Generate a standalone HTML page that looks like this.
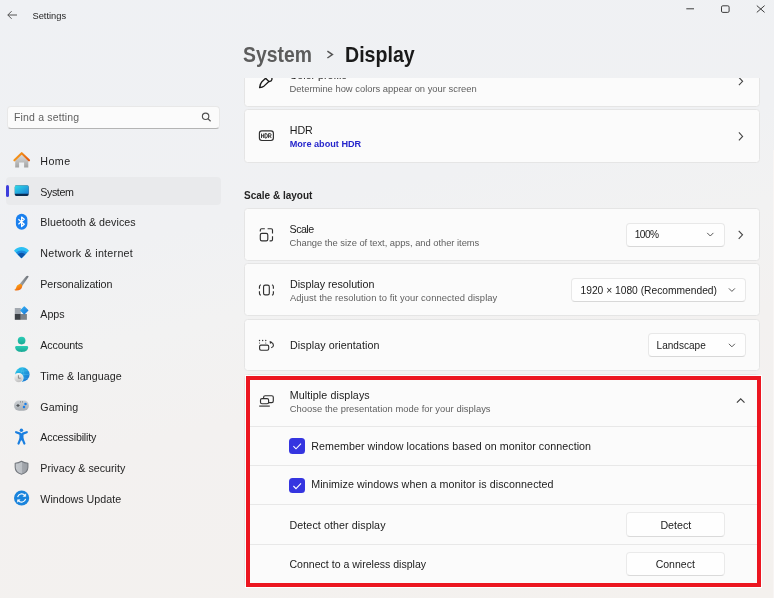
<!DOCTYPE html>
<html><head><meta charset="utf-8">
<style>
html,body{margin:0;padding:0}
body{width:774px;height:598px;overflow:hidden;position:relative;font-family:"Liberation Sans",sans-serif;color:#1b1b1b;
background:linear-gradient(168deg,#eff1f4 0%,#f0f1f3 35%,#f2f2f2 48%,#f3f1f0 62%,#f4f1ee 100%);}
.a{position:absolute;white-space:nowrap;line-height:1}
.t{font-size:10.7px;color:#1b1b1b}
.s{font-size:9.4px;color:#5f5f5f}
.card{position:absolute;left:244px;width:516px;background:#fbfbfb;border:1px solid #e5e5e5;border-radius:3.5px;box-sizing:border-box}
.dd{position:absolute;background:#fefefe;border:1px solid #e8e8e8;border-bottom-color:#d8d8d8;border-radius:4px;box-sizing:border-box}
.btn{position:absolute;background:#fefefe;border:1px solid #eaeaea;border-bottom-color:#dadada;border-radius:4px;box-sizing:border-box}
svg{position:absolute;overflow:visible}
.nav{font-size:10.7px;color:#1f1f1f}
</style></head><body><div id="root" style="position:absolute;left:0;top:0;width:774px;height:598px;will-change:transform">

<!-- title bar -->
<svg style="left:0;top:0" width="20" height="30"><path d="M7.8 15H17M11.6 11.2L7.8 15L11.6 18.8" fill="none" stroke="#555" stroke-width="1"/></svg>
<div class="a" style="left:32.5px;top:11.7px;font-size:9.3px;color:#1f1f1f">Settings</div>
<svg style="left:0;top:0" width="774" height="20">
 <path d="M686.3 8.8H694" stroke="#3c3c3c" stroke-width="1" fill="none"/>
 <rect x="721.5" y="5.8" width="7.6" height="6.6" rx="1.3" stroke="#3c3c3c" stroke-width="1" fill="none"/>
 <path d="M756.8 5.6L764.6 12.4M764.6 5.6L756.8 12.4" stroke="#3c3c3c" stroke-width="1" fill="none"/>
</svg>

<!-- breadcrumb -->
<div class="a" style="left:243.2px;top:43.9px;font-size:21.7px;font-weight:700;color:#5c5c5c;transform:scaleX(0.893);transform-origin:0 0">System</div>
<svg style="left:0;top:0" width="774" height="70"><path d="M327.4 51.2L332.4 54.6L327.4 58" fill="none" stroke="#555" stroke-width="1.5"/></svg>
<div class="a" style="left:345px;top:43.9px;font-size:21.7px;font-weight:700;color:#1a1a1a;transform:scaleX(0.903);transform-origin:0 0">Display</div>

<!-- search -->
<div style="position:absolute;left:6.5px;top:105.6px;width:213.8px;height:23.6px;background:#fbfbfb;border:1px solid #e8e8e8;border-bottom:1.4px solid #b4b4b4;border-radius:4px;box-sizing:border-box"></div>
<div class="a" style="letter-spacing:0.16px;left:14px;top:112.4px;font-size:10.5px;color:#5f5f5f">Find a setting</div>
<svg style="left:0;top:0" width="230" height="130"><circle cx="205.6" cy="116.3" r="3.2" fill="none" stroke="#505050" stroke-width="1.15"/><path d="M207.9 118.6L210.6 121.2" stroke="#505050" stroke-width="1.2"/></svg>

<!-- nav selected -->
<div style="position:absolute;left:6px;top:177px;width:215px;height:27.5px;background:#e9eaec;border-radius:4px"></div>
<div style="position:absolute;left:6.4px;top:184.7px;width:2.2px;height:12.3px;background:#3d3ddc;border-radius:1.5px"></div>

<!-- nav texts -->
<div class="a nav" style="left:40.3px;top:155.9px;letter-spacing:0.43px">Home</div>
<div class="a nav" style="left:40.3px;top:186.6px;letter-spacing:-0.42px">System</div>
<div class="a nav" style="left:40.3px;top:217.3px;letter-spacing:0.05px">Bluetooth &amp; devices</div>
<div class="a nav" style="left:40.3px;top:248.0px;letter-spacing:0.27px">Network &amp; internet</div>
<div class="a nav" style="left:40.3px;top:278.7px;letter-spacing:-0.07px">Personalization</div>
<div class="a nav" style="left:40.3px;top:309.4px">Apps</div>
<div class="a nav" style="left:40.3px;top:340.1px;letter-spacing:-0.16px">Accounts</div>
<div class="a nav" style="left:40.3px;top:370.8px;letter-spacing:0.07px">Time &amp; language</div>
<div class="a nav" style="left:40.3px;top:401.5px;letter-spacing:0.08px">Gaming</div>
<div class="a nav" style="left:40.3px;top:432.2px;letter-spacing:-0.175px">Accessibility</div>
<div class="a nav" style="left:40.3px;top:462.9px">Privacy &amp; security</div>
<div class="a nav" style="left:40.3px;top:493.6px">Windows Update</div>

<!-- nav icons -->
<svg style="left:0;top:0" width="40" height="520">
 <defs>
  <linearGradient id="gHome" x1="0" y1="0" x2="0" y2="1"><stop offset="0" stop-color="#dcdcdc"/><stop offset="1" stop-color="#a2a2a2"/></linearGradient>
  <linearGradient id="gRoof" gradientUnits="userSpaceOnUse" x1="16" y1="153" x2="28" y2="162"><stop offset="0" stop-color="#f7a21e"/><stop offset="1" stop-color="#e2560c"/></linearGradient>
  <linearGradient id="gSys" x1="0" y1="0" x2="1" y2="1"><stop offset="0" stop-color="#2edbe8"/><stop offset="1" stop-color="#1a7ed6"/></linearGradient>
  <linearGradient id="gShield" x1="0" y1="0" x2="1" y2="0"><stop offset="0" stop-color="#c6cacf"/><stop offset="0.5" stop-color="#bcc0c5"/><stop offset="0.5" stop-color="#a4a8ae"/><stop offset="1" stop-color="#9a9ea4"/></linearGradient>
  <linearGradient id="gWifi" x1="0" y1="0" x2="0" y2="1"><stop offset="0" stop-color="#2cb8f0"/><stop offset="1" stop-color="#1070c0"/></linearGradient>
  <linearGradient id="gBrushH" x1="0" y1="0" x2="1" y2="0"><stop offset="0" stop-color="#a4a9ae"/><stop offset="1" stop-color="#6a7076"/></linearGradient>
  <linearGradient id="gBrushT" x1="0" y1="0" x2="0.6" y2="1"><stop offset="0" stop-color="#ffb816"/><stop offset="1" stop-color="#ee6410"/></linearGradient>
  <linearGradient id="gApps" x1="0" y1="0" x2="1" y2="1"><stop offset="0" stop-color="#30b0f4"/><stop offset="1" stop-color="#1a76d6"/></linearGradient>
  <linearGradient id="gAcc" x1="0" y1="0" x2="0" y2="1"><stop offset="0" stop-color="#2ccdb6"/><stop offset="1" stop-color="#18a894"/></linearGradient>
  <linearGradient id="gGlobe" x1="0" y1="0" x2="1" y2="1"><stop offset="0" stop-color="#2ad0ea"/><stop offset="1" stop-color="#1a6cd0"/></linearGradient>
  <linearGradient id="gClock" x1="0" y1="0" x2="0.3" y2="1"><stop offset="0" stop-color="#fafafa"/><stop offset="1" stop-color="#c4c4c4"/></linearGradient>
  <linearGradient id="gGame" x1="0" y1="0" x2="0" y2="1"><stop offset="0" stop-color="#ccd0d4"/><stop offset="1" stop-color="#a8adb2"/></linearGradient>
 </defs>
 <!-- home -->
 <path d="M15.2 160.6V167.6H19.1V162.4H24.1V167.6H28.3V160.6L21.7 154.4Z" fill="url(#gHome)"/>
 <path d="M14.4 160.3L21.7 153.2L29 160.3" fill="none" stroke="url(#gRoof)" stroke-width="2.1" stroke-linecap="round" stroke-linejoin="round"/>
 <!-- system -->
 <rect x="14.8" y="185.6" width="13.8" height="10.4" rx="1.4" fill="#0a2c52"/>
 <path d="M14.8 193.8V187Q14.8 185.6 16.2 185.6H27.2Q28.6 185.6 28.6 187V193.8Z" fill="url(#gSys)"/>
 <!-- bluetooth -->
 <rect x="15.9" y="213.8" width="11.5" height="15.9" rx="5.75" fill="#1a80ee"/>
 <path d="M18.4 219.3L24.3 224.2L21.6 226.5V217L24.3 219.3L18.4 224.2" fill="none" stroke="#fff" stroke-width="1.2" stroke-linejoin="round"/>
 <!-- wifi -->
 <path d="M21.5 258.3L14 250.7Q17 247 21.5 247Q26 247 29 250.7Z" fill="#2cc0f4"/>
 <path d="M21.5 258.3L15.9 252.6A8.4 8.4 0 0 1 27.1 252.6Z" fill="#1a8ae0"/>
 <path d="M21.5 258.3L17.6 254.3A5.6 5.6 0 0 1 25.4 254.3Z" fill="#0d54a8"/>
 <!-- brush -->
 <path d="M26.2 276.2Q27.6 275 28.7 276.4L22 286.2L19.2 284.6Z" fill="url(#gBrushH)"/>
 <path d="M19.2 284.2C20.8 283.4 22.5 284.5 22.2 286.6C21.9 289 19.6 290.6 16.6 290.6C15.6 290.6 14.8 290.3 14.2 289.7C15.6 289.4 16 288.4 16.3 287.2C16.7 285.6 17.8 284.7 19.2 284.2Z" fill="url(#gBrushT)"/>
 <!-- apps -->
 <rect x="14.8" y="308" width="6" height="6" fill="#a3a9b0"/>
 <rect x="14.8" y="314" width="6" height="5.8" fill="#3c4146"/>
 <rect x="20.8" y="314" width="6.1" height="5.8" fill="#7c8288"/>
 <path d="M24.3 306.9L27.8 310.4L24.3 313.9L20.8 310.4Z" fill="url(#gApps)" stroke="url(#gApps)" stroke-width="1.2" stroke-linejoin="round"/>
 <!-- accounts -->
 <circle cx="21.6" cy="340.6" r="3.85" fill="url(#gAcc)"/>
 <path d="M15.2 347.2C15.2 346.4 15.8 345.9 16.6 345.9H26.7C27.5 345.9 28.1 346.4 28.1 347.2C28.1 350.2 25.6 351.9 21.65 351.9C17.7 351.9 15.2 350.2 15.2 347.2Z" fill="url(#gAcc)"/>
 <!-- time -->
 <circle cx="22.4" cy="374.5" r="7.2" fill="url(#gGlobe)"/>
 <path d="M15.4 374.5H29.4M17 370.4Q22.4 372.2 27.8 370.4M17 378.6Q22.4 376.8 27.8 378.6M22.4 367.4Q19.4 374.5 22.4 381.7M22.4 367.4Q25.4 374.5 22.4 381.7" stroke="#6fd3f4" stroke-width="0.45" fill="none" opacity="0.6"/>
 <circle cx="18.6" cy="377.9" r="4.9" fill="#f4f4f4"/>
 <circle cx="18.6" cy="377.9" r="4.3" fill="url(#gClock)"/>
 <path d="M18.4 375.6V378.2H20.3" stroke="#7c7c7c" stroke-width="0.85" fill="none" stroke-linecap="round"/>
 <!-- gaming -->
 <rect x="14" y="400.6" width="14.9" height="10.1" rx="5.05" fill="url(#gGame)"/>
 <path d="M16.4 405.5H19.6M18 403.9V407.1" stroke="#505458" stroke-width="1.2"/>
 <path d="M20.5 401.3V402.5M22.5 401.3V402.5" stroke="#6a6e72" stroke-width="0.7"/>
 <circle cx="25.5" cy="404.1" r="1.25" fill="#1a7ee8"/><circle cx="24" cy="407" r="1.25" fill="#1a7ee8"/>
 <!-- accessibility -->
 <circle cx="21.4" cy="430.3" r="1.75" fill="#1a7fe0"/>
 <path d="M16.1 432.2L20 433.6M26.8 432.2L22.9 433.6" stroke="#1a7fe0" stroke-width="2.2" stroke-linecap="round"/>
 <path d="M19.4 433.2H23.5V439.4Q23.5 440.4 21.45 440.4Q19.4 440.4 19.4 439.4Z" fill="#1a7fe0"/>
 <path d="M20.3 439.2L18.5 443.6M22.6 439.2L24.4 443.6" stroke="#1a7fe0" stroke-width="2.2" stroke-linecap="round"/>
 <!-- shield -->
 <path d="M21.5 461.3C19.6 462.6 17.4 463.2 15.2 463.2V467.2C15.2 470.8 18.2 473.3 21.5 474.2C24.8 473.3 27.9 470.8 27.9 467.2V463.2C25.6 463.2 23.4 462.6 21.5 461.3Z" fill="url(#gShield)" stroke="#74787e" stroke-width="1.1" stroke-linejoin="round"/>
 <!-- update -->
 <circle cx="21.6" cy="498" r="7.6" fill="#1a84dc"/>
 <path d="M17.6 497.2A4.1 4.1 0 0 1 24.9 495.6M25.6 498.9A4.1 4.1 0 0 1 18.3 500.5" fill="none" stroke="#fff" stroke-width="1.1"/>
 <path d="M25.7 493.8V496.4H23.1Z M17.5 502.3V499.7H20.1Z" fill="#fff" stroke="#fff" stroke-width="0.5" stroke-linejoin="round"/>
</svg>

<!-- content scroll area -->
<div style="position:absolute;left:236px;top:77.6px;width:538px;height:521px;overflow:hidden">
 <div style="position:absolute;left:-236px;top:-77.6px;width:774px;height:700px">
  <!-- color profile -->
  <div class="card" style="top:54px;height:53px"></div>
  <div class="a t" style="left:289.6px;top:69.6px">Color profile</div>
  <div class="a s" style="left:289.6px;top:83.6px">Determine how colors appear on your screen</div>
  <svg style="left:0;top:0" width="774" height="200">
   <path d="M259.6 87.6C259.9 85.6 260.4 83.4 261.9 81.8L265.6 78.2L268.9 81.5L264.2 85.9C262.8 87 261.4 87.4 259.6 87.6Z M268.9 81.5C270.4 81.6 271.6 81.2 271.9 79.6L272 77" fill="none" stroke="#1a1a1a" stroke-width="1.3" stroke-linejoin="round"/>
   <path d="M738.9 77.4L742.6 81.3L738.9 85.2" fill="none" stroke="#444" stroke-width="1.1"/>
  </svg>

  <!-- HDR -->
  <div class="card" style="top:109px;height:53.5px"></div>
  <div class="a t" style="left:289.7px;top:124.8px">HDR</div>
  <div class="a" style="left:289.7px;top:139.8px;font-size:9.15px;font-weight:700;color:#2626cc">More about HDR</div>
  <svg style="left:0;top:0" width="774" height="200">
   <rect x="259.4" y="130.9" width="14" height="9.6" rx="2.4" fill="none" stroke="#303030" stroke-width="1.15"/>
   <path d="M261.5 133.6V138M261.5 135.8H263.7M263.7 133.6V138M265 133.6V138H265.9Q267.4 138 267.4 135.8Q267.4 133.6 265.9 133.6Z M268.6 138V133.6H269.9Q271.1 133.6 271.1 134.8Q271.1 136 269.9 136H268.6M269.9 136L271.2 138" fill="none" stroke="#303030" stroke-width="0.95"/>
   <path d="M738.9 132.4L742.6 136.4L738.9 140.4" fill="none" stroke="#444" stroke-width="1.1"/>
  </svg>

  <!-- heading -->
  <div class="a" style="left:244.4px;top:191px;font-size:10.4px;font-weight:700;color:#242424;transform:scaleX(0.963);transform-origin:0 0">Scale &amp; layout</div>

  <!-- scale -->
  <div class="card" style="top:208.1px;height:52.8px"></div>
  <div class="a t" style="letter-spacing:-0.55px;left:289.6px;top:223.5px">Scale</div>
  <div class="a s" style="letter-spacing:-0.035px;left:289.6px;top:237.6px">Change the size of text, apps, and other items</div>
  <div class="dd" style="left:626px;top:222.6px;width:99px;height:24px"></div>
  <div class="a" style="letter-spacing:-0.55px;left:634.7px;top:229.8px;font-size:10.2px;color:#1b1b1b">100%</div>
  <svg style="left:0;top:0" width="774" height="400">
   <path d="M260.3 231.6V230Q260.3 228.7 261.6 228.7H264.8M267.6 228.7H271.2Q272.5 228.7 272.5 230V233.6M272.5 236.2V239.6Q272.5 240.9 271.2 240.9H269.6" fill="none" stroke="#303030" stroke-width="1.15"/>
   <rect x="260.3" y="233.3" width="7.5" height="7.6" rx="1.6" fill="none" stroke="#303030" stroke-width="1.15"/>
   <path d="M707.2 232.9L710.3 236L713.4 232.9" fill="none" stroke="#444" stroke-width="0.9"/>
   <path d="M738.7 230.8L742.5 234.8L738.7 238.8" fill="none" stroke="#444" stroke-width="1.1"/>
  </svg>

  <!-- resolution -->
  <div class="card" style="top:262.8px;height:53.1px"></div>
  <div class="a t" style="left:290px;top:278.6px">Display resolution</div>
  <div class="a s" style="letter-spacing:0.07px;left:290px;top:292.7px">Adjust the resolution to fit your connected display</div>
  <div class="dd" style="left:571.4px;top:278.3px;width:174.6px;height:24px"></div>
  <div class="a" style="left:580.5px;top:285.6px;font-size:10.25px;color:#1b1b1b">1920 × 1080 (Recommended)</div>
  <svg style="left:0;top:0" width="774" height="400">
   <rect x="263.55" y="285.1" width="5.75" height="9.8" rx="1.7" fill="none" stroke="#303030" stroke-width="1.15"/>
   <path d="M260.9 284.7Q259.45 285.1 259.45 286.8V288.8M259.45 291.2V293.2Q259.45 294.9 260.9 295.3M271.95 284.7Q273.4 285.1 273.4 286.8V288.8M273.4 291.2V293.2Q273.4 294.9 271.95 295.3" fill="none" stroke="#303030" stroke-width="1.15"/>
   <path d="M728.9 288.4L731.9 291.4L734.9 288.4" fill="none" stroke="#444" stroke-width="0.9"/>
  </svg>

  <!-- orientation -->
  <div class="card" style="top:318.6px;height:52.3px"></div>
  <div class="a t" style="letter-spacing:0.08px;left:290px;top:339.9px">Display orientation</div>
  <div class="dd" style="left:647.5px;top:333.4px;width:98.5px;height:24px"></div>
  <div class="a" style="left:656.6px;top:340.8px;font-size:10.05px;color:#1b1b1b">Landscape</div>
  <svg style="left:0;top:0" width="774" height="400">
   <circle cx="259.55" cy="340.5" r="0.7" fill="#303030"/><circle cx="262.65" cy="340.5" r="0.7" fill="#303030"/><circle cx="265.75" cy="340.5" r="0.7" fill="#303030"/>
   <path d="M259.55 342.3V344M265.75 342.3V344" stroke="#303030" stroke-width="0.9" opacity="0.55"/>
   <rect x="259.6" y="345.05" width="9.1" height="5.2" rx="1.4" fill="none" stroke="#303030" stroke-width="1.15"/>
   <path d="M270.9 342.3Q273.45 343.1 273.45 345.2Q273.4 347.3 271.2 347.8" fill="none" stroke="#303030" stroke-width="1.1"/>
   <path d="M269.9 341.2L271.9 342.2L270.2 343.6Z" fill="#303030" stroke="#303030" stroke-width="0.5" stroke-linejoin="round"/>
   <path d="M728.9 343.8L731.9 346.8L734.9 343.8" fill="none" stroke="#444" stroke-width="0.9"/>
  </svg>

  <!-- multiple displays -->
  <div class="card" style="top:374px;height:213px"></div>
  <div class="a t" style="letter-spacing:0.1px;left:289.7px;top:390px">Multiple displays</div>
  <div class="a s" style="letter-spacing:0.04px;left:289.7px;top:403.5px">Choose the presentation mode for your displays</div>
  <svg style="left:0;top:0" width="774" height="600">
   <rect x="263.6" y="395.7" width="9.7" height="6.9" rx="1.6" fill="none" stroke="#303030" stroke-width="1.15"/>
   <rect x="260.5" y="398.6" width="8.1" height="5.1" rx="1.5" fill="#fbfbfb" stroke="#303030" stroke-width="1.15"/>
   <path d="M259.2 406.1H269.8" stroke="#3a3a3a" stroke-width="1.2"/>
   <path d="M736.9 402.7L740.7 398.9L744.5 402.7" fill="none" stroke="#404040" stroke-width="1.2"/>
  </svg>
  <div style="position:absolute;left:245px;top:425.8px;width:513px;height:1px;background:#e8e8e8"></div>
  <div style="position:absolute;left:245px;top:465px;width:513px;height:1px;background:#e8e8e8"></div>
  <div style="position:absolute;left:245px;top:504.2px;width:513px;height:1px;background:#e8e8e8"></div>
  <div style="position:absolute;left:245px;top:543.8px;width:513px;height:1px;background:#e8e8e8"></div>

  <div style="position:absolute;left:289.3px;top:438.2px;width:15.6px;height:15.6px;background:#3535e0;border-radius:3.5px"></div>
  <div style="position:absolute;left:289.3px;top:477.6px;width:15.6px;height:15.6px;background:#3535e0;border-radius:3.5px"></div>
  <svg style="left:0;top:0" width="774" height="600">
   <path d="M293.4 446.2L296 448.8L301 443.6" fill="none" stroke="#fff" stroke-width="1.1"/>
   <path d="M293.4 486L296 488.6L301 483.4" fill="none" stroke="#fff" stroke-width="1.1"/>
  </svg>
  <div class="a t" style="letter-spacing:0.058px;left:311.2px;top:440.7px">Remember window locations based on monitor connection</div>
  <div class="a t" style="letter-spacing:0.078px;left:311.2px;top:478.8px">Minimize windows when a monitor is disconnected</div>

  <div class="a t" style="letter-spacing:0.08px;left:289.5px;top:520.2px">Detect other display</div>
  <div class="btn" style="left:625.8px;top:512.2px;width:99px;height:24.6px"></div>
  <div class="a t" style="left:660.4px;top:519.8px">Detect</div>

  <div class="a t" style="left:289.5px;top:559.2px;font-size:10.55px">Connect to a wireless display</div>
  <div class="btn" style="left:625.8px;top:551.5px;width:99px;height:24.2px"></div>
  <div class="a t" style="left:655.7px;top:558.7px;font-size:10.5px">Connect</div>
 </div>
</div>

<div style="position:absolute;left:773px;top:150px;width:1px;height:448px;background:#f8f5f4"></div>
<!-- red annotation box -->
<div style="position:absolute;left:246px;top:376px;width:515px;height:211px;border:4px solid #ec1620;box-sizing:border-box;box-shadow:0 0 0 1px #ffffff"></div>

</div></body></html>
